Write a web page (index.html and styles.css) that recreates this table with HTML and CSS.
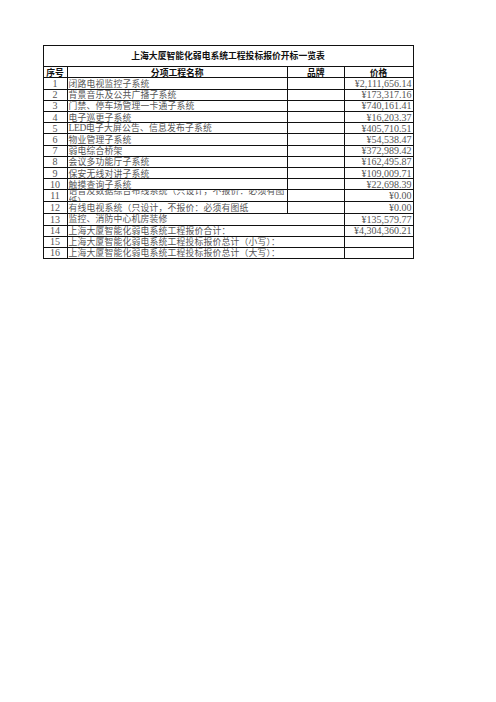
FILE: index.html
```html
<!DOCTYPE html>
<html lang="zh">
<head>
<meta charset="utf-8">
<title>上海大厦智能化弱电系统工程投标报价开标一览表</title>
<link rel="stylesheet" href="styles.css">
</head>
<body>
<table class="sheet">
  <colgroup>
    <col class="c-no">
    <col class="c-name">
    <col class="c-brand">
    <col class="c-price">
  </colgroup>
  <tr class="r-title"><td colspan="4" class="title">上海大厦智能化弱电系统工程投标报价开标一览表</td></tr>
  <tr class="r-head">
    <td class="th">序号</td>
    <td class="th">分项工程名称</td>
    <td class="th">品牌</td>
    <td class="th">价格</td>
  </tr>
  <tr class="r"><td class="no">1</td><td class="name">闭路电视监控子系统</td><td></td><td class="price">¥2,111,656.14</td></tr>
  <tr class="r"><td class="no">2</td><td class="name">背景音乐及公共广播子系统</td><td></td><td class="price">¥173,317.16</td></tr>
  <tr class="r"><td class="no">3</td><td class="name">门禁、停车场管理一卡通子系统</td><td></td><td class="price">¥740,161.41</td></tr>
  <tr class="r"><td class="no">4</td><td class="name">电子巡更子系统</td><td></td><td class="price">¥16,203.37</td></tr>
  <tr class="r"><td class="no">5</td><td class="name"><span class="lat">LED</span>电子大屏公告、信息发布子系统</td><td></td><td class="price">¥405,710.51</td></tr>
  <tr class="r"><td class="no">6</td><td class="name">物业管理子系统</td><td></td><td class="price">¥54,538.47</td></tr>
  <tr class="r"><td class="no">7</td><td class="name">弱电综合桥架</td><td></td><td class="price">¥372,989.42</td></tr>
  <tr class="r"><td class="no">8</td><td class="name">会议多功能厅子系统</td><td></td><td class="price">¥162,495.87</td></tr>
  <tr class="r"><td class="no">9</td><td class="name">保安无线对讲子系统</td><td></td><td class="price">¥109,009.71</td></tr>
  <tr class="r"><td class="no">10</td><td class="name">触摸查询子系统</td><td></td><td class="price">¥22,698.39</td></tr>
  <tr class="r tall"><td class="no">11</td><td class="name"><div class="clip"><div class="wrapped">语音及数据综合布线系统（只设计，不报价：必须有图纸）</div></div></td><td></td><td class="price">¥0.00</td></tr>
  <tr class="r tall"><td class="no">12</td><td class="name">有线电视系统（只设计，不报价：必须有图纸</td><td></td><td class="price">¥0.00</td></tr>
  <tr class="r tall"><td class="no">13</td><td class="name top" colspan="2">监控、消防中心机房装修</td><td class="price">¥135,579.77</td></tr>
  <tr class="r dotted"><td class="no">14</td><td class="name" colspan="2">上海大厦智能化弱电系统工程报价合计：</td><td class="price">¥4,304,360.21</td></tr>
  <tr class="r"><td class="no">15</td><td class="name" colspan="2">上海大厦智能化弱电系统工程投标报价总计（小写）：</td><td class="price"></td></tr>
  <tr class="r"><td class="no">16</td><td class="name" colspan="2">上海大厦智能化弱电系统工程投标报价总计（大写）：</td><td class="price"></td></tr>
</table>
</body>
</html>
```

FILE: styles.css
```css
html, body {
  margin: 0;
  padding: 0;
  background: #ffffff;
}

body {
  padding: 44.5px 0 0 42.5px;
}

.sheet {
  border-collapse: collapse;
  table-layout: fixed;
  width: 370px;
  font-family: "Noto Sans CJK SC", "Liberation Serif", serif;
  font-size: 8.8px;
  color: #555;
}

.c-no { width: 24px; }
.c-name { width: 220.5px; }
.c-brand { width: 56.5px; }
.c-price { width: 69px; }

.sheet td {
  border: 1px solid #111;
  padding: 0 1px;
  line-height: 9px;
  white-space: nowrap;
  overflow: visible;
  vertical-align: middle;
}

.r-title { height: 21.3px; }
.r-head { height: 11.7px; }
.r { height: 11.2px; }
.r.tall { height: 11.7px; }
.r.dotted, .r.dotted ~ .r { height: 11px; }

.title {
  text-align: center;
  font-weight: 700;
  font-size: 8.8px;
  color: #111;
}

.th {
  text-align: center;
  font-weight: 700;
  color: #111;
  font-size: 8.8px;
}

.no {
  text-align: center;
  font-family: "Liberation Serif", serif;
  font-size: 10px;
  color: #555;
}

.name {
  text-align: left;
  letter-spacing: 0.2px;
}

.name.top {
  vertical-align: top;
}

.lat {
  font-family: "Liberation Serif", serif;
  font-size: 9.5px;
  letter-spacing: -0.3px;
}

.price {
  text-align: right;
  font-family: "Liberation Serif", serif;
  font-size: 10px;
  color: #555;
}

.sheet .r.dotted td {
  border-bottom: 1px dotted #999;
}

.clip {
  height: 11px;
  overflow: hidden;
  clip-path: inset(0 -120px 0 0);
  display: flex;
  align-items: center;
}

.wrapped {
  width: 228px;
  flex: none;
  white-space: normal;
  line-height: 9.5px;
}
```
